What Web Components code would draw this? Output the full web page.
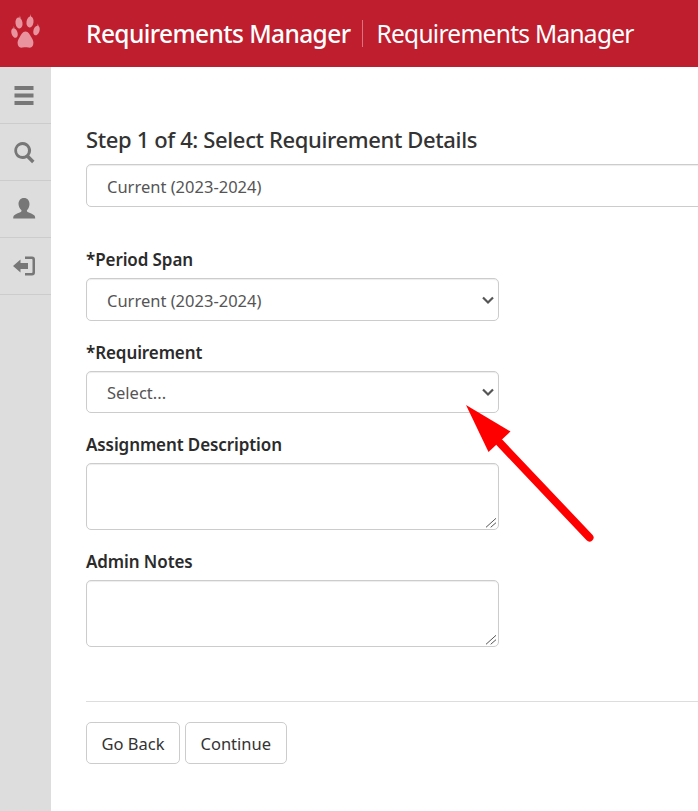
<!DOCTYPE html>
<html>
<head>
<meta charset="utf-8">
<title>Requirements Manager</title>
<style>
  html, body { margin: 0; height: 811px; overflow: hidden; background: #fff; }
  body { font-family: "Noto Sans", "Open Sans", sans-serif; color: #333; position: relative; }
</style>
</head>
<body>
<app-header heading="Requirements Manager" subheading="Requirements Manager"></app-header>
<div style="display:flex;height:744px">
  <side-nav></side-nav>
  <step-form></step-form>
</div>
<callout-arrow></callout-arrow>

<script>
const headerTemplate = document.createElement("template");
headerTemplate.innerHTML = `
  <style>
  :host { display: flex; height: 67px; background: #be1e2e; color: #fff; align-items: center; }
  .logo { width: 51px; display: flex; justify-content: center; margin-top: -3px; }
  .titles { display: flex; align-items: center; margin-left: 35px; white-space: nowrap; font-size: 24.5px; }
  .main { font-weight: 500; padding-right: 12px; border-right: 1px solid #d9737e; line-height: 27px; letter-spacing: -.6px; }
  .sub { padding-left: 13px; line-height: 27px; letter-spacing: -.72px; }
  </style>
  <div class="logo">
    <svg width="30" height="36" viewBox="0 0 30 36" fill="#e8939e">
      <path d="M14.500 17.500c-3 0-4.500 3.500-6 6-1.200 2-2.500 4-1.700 7 .7 3 3 3.500 5 3 1.800-.5 3.600-.5 5.400 0 2 .5 4.300 0 5-3 .8-3-.5-5-1.700-7-1.500-2.500-3-6-6-6z"/>
      <ellipse cx="8" cy="9" rx="3.500" ry="5.500" transform="rotate(-8 8 9)"/>
      <ellipse cx="19" cy="8" rx="3.500" ry="5.500" transform="rotate(8 19 8)"/>
      <ellipse cx="3.500" cy="19" rx="3" ry="5" transform="rotate(-18 3.500 19)"/>
      <ellipse cx="25.500" cy="16.500" rx="3" ry="5" transform="rotate(18 25.500 16.500)"/>
      <path d="M8.500 4l.4-2.500.7 2.500zM19 3l.4-3 .7 3zM2.500 14.500l.3-2.500.7 2.500zM26.500 12l.3-2.500.7 2.500z"/>
    </svg>
  </div>
  <div class="titles"><span class="main" id="main"></span><span class="sub" id="sub"></span></div>
`;

class AppHeader extends HTMLElement {
  constructor () {
    super();
    this.attachShadow({ mode: "open" });
    this.shadowRoot.appendChild(headerTemplate.content.cloneNode(true));
    this.shadowRoot.querySelector("#main").innerText = this.getAttribute("heading");
    this.shadowRoot.querySelector("#sub").innerText = this.getAttribute("subheading");
  }
}

const navTemplate = document.createElement("template");
navTemplate.innerHTML = `
  <style>
  :host { display: block; width: 51px; flex: none; background: #ddd; }
  a { display: flex; height: 56px; border-bottom: 1px solid #ccc; align-items: center; justify-content: center; padding-right: 4px; }
  svg { display: block; fill: #777; }
  </style>
  <a aria-label="Menu"><svg width="24" height="24" viewBox="0 0 24 24"><path d="M2.500 3h19v4h-19zM2.500 10.500h19v4h-19zM2.500 18h19v4h-19z"/></svg></a>
  <a aria-label="Search"><svg width="24" height="24" viewBox="0 0 24 24"><path fill-rule="evenodd" d="M10.500 2a8.500 8.500 0 0 1 6.800 13.600l5.200 5.200-2.400 2.400-5.300-5.200A8.500 8.500 0 1 1 10.500 2zm0 3a5.500 5.500 0 1 0 0 11 5.500 5.500 0 0 0 0-11z"/></svg></a>
  <a aria-label="Profile"><svg width="24" height="24" viewBox="0 0 24 24"><path d="M12 1c3.600 0 5.500 2.700 5.500 6 0 2.600-1.100 4.700-2.400 6-.4.500-.3 1.400.5 1.900 2.200 1 5.300 2 6.800 3.500.7.700.8 2 .8 3.100H1.200c0-1.100.1-2.400.8-3.100 1.500-1.500 4.600-2.500 6.800-3.500.8-.5.900-1.400.5-1.900-1.300-1.300-2.800-3.400-2.800-6 0-3.300 1.900-6 5.500-6z"/></svg></a>
  <a aria-label="Sign out"><svg width="24" height="24" viewBox="0 0 24 24"><path d="M13 2.500h7c2 0 3 1.200 3 3v13c0 1.800-1 3-3 3h-7V19h6.500c.6 0 1-.4 1-1V6c0-.6-.4-1-1-1H13z"/><path d="M1 12l7.500-6.500V9H16v6H8.500v3.500z"/></svg></a>
`;

class SideNav extends HTMLElement {
  constructor () {
    super();
    this.attachShadow({ mode: "open" });
    this.shadowRoot.appendChild(navTemplate.content.cloneNode(true));
  }
}

const fieldTemplate = document.createElement("template");
fieldTemplate.innerHTML = `
  <style>
  :host { display: block; }
  label { display: block; font-weight: 600; font-size: 17px; line-height: 24px; letter-spacing: -.1px; color: #2b2b2b; margin-bottom: 6px; }
  label:empty { display: none; }
  .control { position: relative; height: var(--control-height, 43px); box-sizing: border-box; width: var(--control-width, 413px); }
  select, textarea {
    display: block; width: 100%; height: 100%; box-sizing: border-box; margin: 0;
    border: 1px solid #ccc; border-radius: 5px; background: #fff;
    box-shadow: inset 0 1px 1px rgba(0,0,0,.075);
    font: inherit; font-size: 16.5px; color: #555;
    outline: none; appearance: none; -webkit-appearance: none;
  }
  select { padding: 1px 20px 0; }
  textarea { resize: vertical; padding: 6px 20px; }
  textarea::-webkit-resizer { background: transparent; }
  .chevron { position: absolute; right: 4px; top: 50%; margin-top: -7px; pointer-events: none; }
  .grip { position: absolute; right: 2px; bottom: 2px; pointer-events: none; }
  </style>
  <label id="label"></label>
  <div class="control" id="control"></div>
`;

class FormField extends HTMLElement {
  constructor () {
    super();
    this.attachShadow({ mode: "open" });
    this.shadowRoot.appendChild(fieldTemplate.content.cloneNode(true));

    const control = this.shadowRoot.querySelector("#control");
    this.shadowRoot.querySelector("#label").textContent = this.getAttribute("label") || "";

    if (this.getAttribute("type") === "textarea") {
      control.appendChild(document.createElement("textarea"));
      control.insertAdjacentHTML("beforeend", `<svg class="grip" width="12" height="12" viewBox="0 0 12 12" fill="none" stroke="#555"><path d="M1 11.300L11 2.300M5.700 11.300L11 6.700"/></svg>`);
    } else {
      const select = document.createElement("select");
      const option = document.createElement("option");
      option.textContent = this.getAttribute("value");
      select.appendChild(option);
      control.appendChild(select);
      control.insertAdjacentHTML("beforeend", `<svg class="chevron" width="14" height="14" viewBox="0 0 14 14" fill="none" stroke="#555" stroke-width="2.200"><path d="M2 4.500l5 5 5-5"/></svg>`);
    }
  }
}

const btnTemplate = document.createElement("template");
btnTemplate.innerHTML = `
  <style>
  :host { display: inline-block; }
  button {
    display: block; height: 42px; box-sizing: border-box; padding: 0 14.500px;
    background: #fff; border: 1px solid #ccc; border-radius: 5px;
    font: inherit; font-size: 16.5px; color: #333;
  }
  </style>
  <button><slot></slot></button>
`;

class FormButton extends HTMLElement {
  constructor () {
    super();
    this.attachShadow({ mode: "open" });
    this.shadowRoot.appendChild(btnTemplate.content.cloneNode(true));
  }
}

const formTemplate = document.createElement("template");
formTemplate.innerHTML = `
  <style>
  :host { display: block; flex: 1; min-width: 0; overflow: hidden; padding: 56px 0 0 35px; }
  h2 { margin: 0 0 9px; font-size: 22px; font-weight: 500; line-height: 32px; letter-spacing: -.37px; color: #333; }
  .current { --control-width: 700px; margin-bottom: 41px; }
  form-field { margin-bottom: 20px; }
  .short { --control-height: 42px; }
  .desc { --control-height: 67px; }
  hr { border: 0; border-top: 1px solid #ddd; margin: 54px 0 20px; }
  .actions { display: flex; gap: 5px; }
  </style>
  <h2>Step 1 of 4: Select Requirement Details</h2>
  <form-field class="current" value="Current (2023-2024)"></form-field>
  <form-field label="*Period Span" value="Current (2023-2024)"></form-field>
  <form-field class="short" label="*Requirement" value="Select..."></form-field>
  <form-field class="desc" label="Assignment Description" type="textarea"></form-field>
  <form-field class="desc" label="Admin Notes" type="textarea"></form-field>
  <hr>
  <div class="actions">
    <form-button>Go Back</form-button>
    <form-button>Continue</form-button>
  </div>
`;

class StepForm extends HTMLElement {
  constructor () {
    super();
    this.attachShadow({ mode: "open" });
    this.shadowRoot.appendChild(formTemplate.content.cloneNode(true));
  }
}

const arrowTemplate = document.createElement("template");
arrowTemplate.innerHTML = `
  <style>
  :host { position: absolute; left: 460px; top: 400px; width: 140px; height: 145px; pointer-events: none; }
  </style>
  <svg width="140" height="145" viewBox="460 400 140 145">
    <path d="M500 443L589.500 537.500" stroke="#f00" stroke-width="8" stroke-linecap="round" fill="none"/>
    <path d="M466 405L510.500 431.500 488.500 452z" fill="#f00"/>
  </svg>
`;

class CalloutArrow extends HTMLElement {
  constructor () {
    super();
    this.attachShadow({ mode: "open" });
    this.shadowRoot.appendChild(arrowTemplate.content.cloneNode(true));
  }
}

window.customElements.define("app-header", AppHeader);
window.customElements.define("side-nav", SideNav);
window.customElements.define("form-field", FormField);
window.customElements.define("form-button", FormButton);
window.customElements.define("step-form", StepForm);
window.customElements.define("callout-arrow", CalloutArrow);
</script>
</body>
</html>
